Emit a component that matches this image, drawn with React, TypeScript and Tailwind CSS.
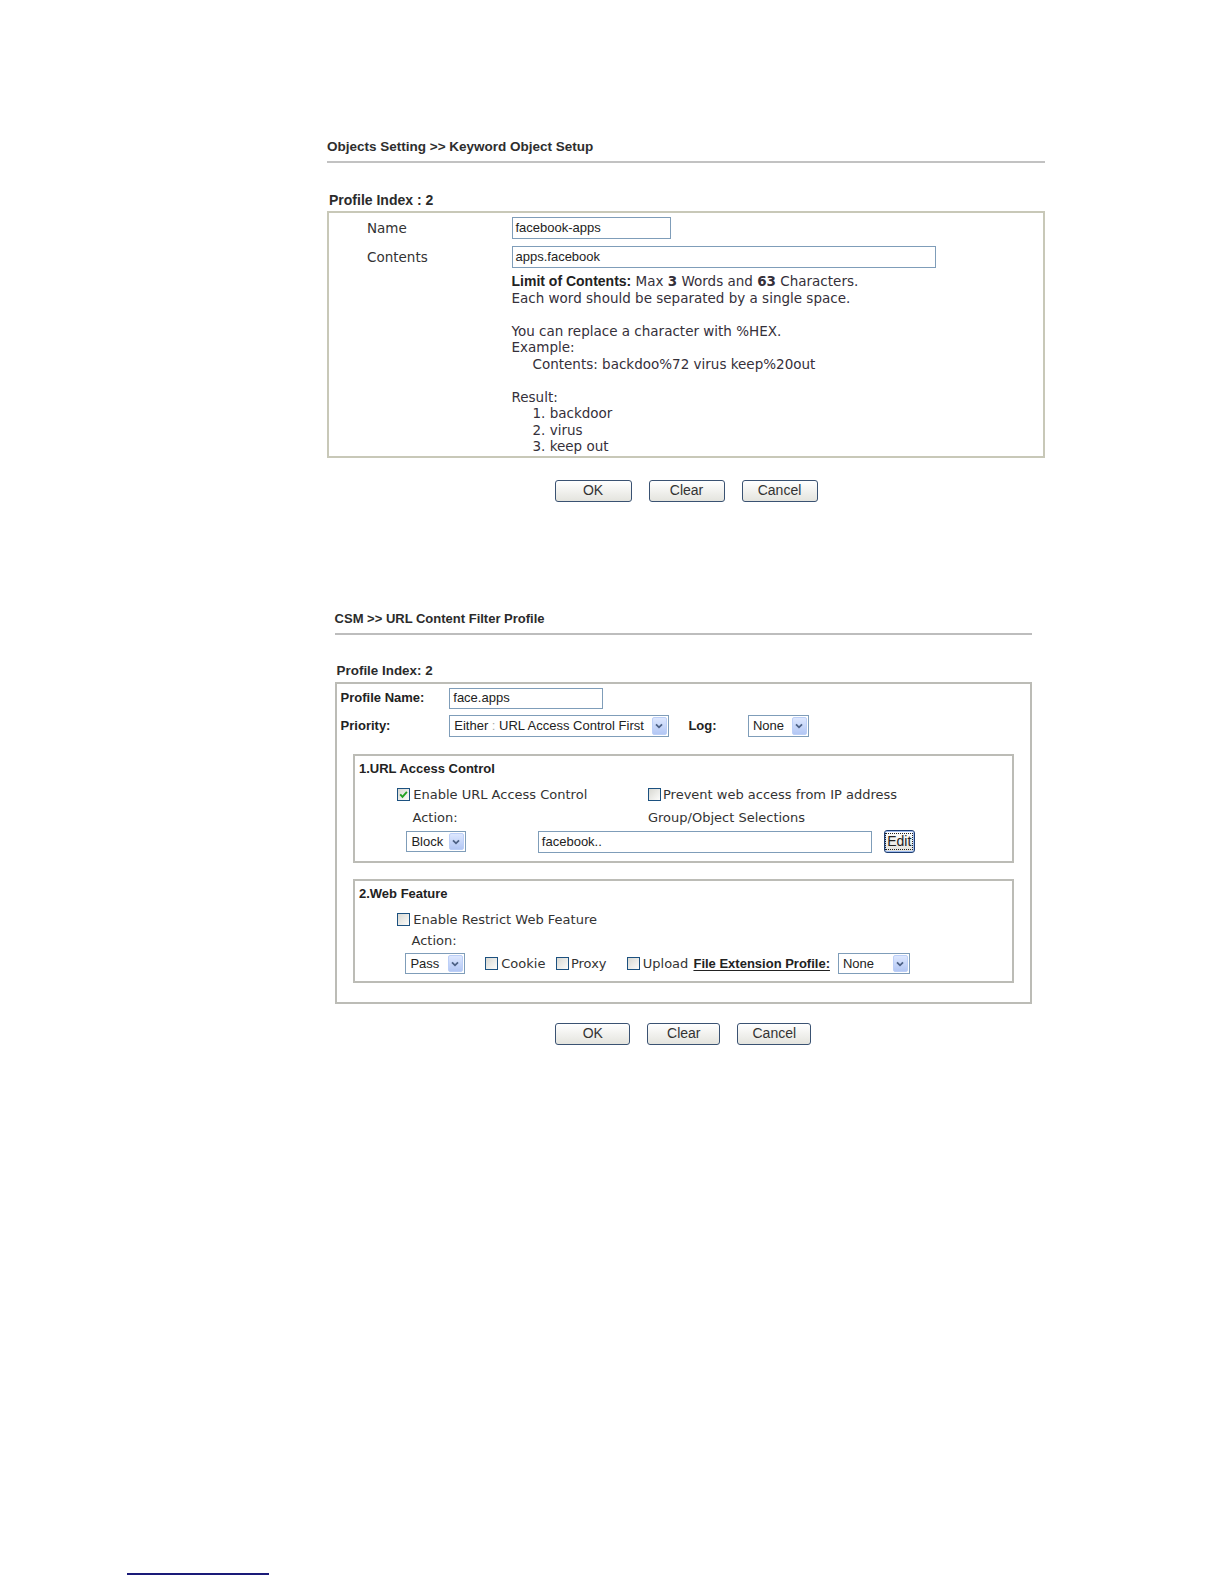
import React from "react";

const ARIAL = "font-['Liberation_Sans',Arial,sans-serif]";
const VERD = "font-['DejaVu_Sans',Verdana,sans-serif]";

function Arrow() {
  return (
    <span className="ml-auto mr-[1px] my-[1px] flex w-[15px] shrink-0 self-stretch items-center justify-center rounded-[2px] border border-[#bccff7] bg-linear-to-b from-[#dde7fe] to-[#b3c7f4]">
      <svg width="8" height="6" viewBox="0 0 8 6">
        <path d="M1 1.3 L4 4.3 L7 1.3" fill="none" stroke="#4d6185" strokeWidth="1.8" />
      </svg>
    </span>
  );
}

function Select({ cls, children }: { cls: string; children: React.ReactNode }) {
  return (
    <div className={"flex items-center border border-[#7f9db9] bg-white text-[13px] text-[#222] " + ARIAL + " " + cls}>
      <span className="pl-[4px] whitespace-nowrap">{children}</span>
      <Arrow />
    </div>
  );
}

function Input({ cls, value }: { cls: string; value: string }) {
  return (
    <div className={"flex items-center border border-[#7f9db9] bg-white pl-[3px] text-[13px] text-[#222] whitespace-nowrap " + ARIAL + " " + cls}>
      {value}
    </div>
  );
}

function Cb({ checked }: { checked?: boolean }) {
  return (
    <span className="flex h-[13px] w-[13px] shrink-0 items-center justify-center border border-[#1c5180] bg-linear-to-br from-[#d8d8d2] to-[#fcfcfb]">
      {checked && (
        <svg width="9" height="9" viewBox="0 0 9 9">
          <path d="M1.2 4.4 L3.5 6.8 L7.9 1.9" fill="none" stroke="#21a121" strokeWidth="1.9" />
        </svg>
      )}
    </span>
  );
}

function Btn({ label, cls }: { label: string; cls: string }) {
  return (
    <div className={"flex h-[22px] items-center justify-center rounded-[3px] border border-[#3a5272] bg-linear-to-b from-[#ffffff] to-[#e4e4de] text-[14px] text-[#333] " + ARIAL + " " + cls}>
      {label}
    </div>
  );
}

function Line({ children }: { children?: React.ReactNode }) {
  return <div className="h-[16.5px] leading-[16.5px] whitespace-nowrap">{children}</div>;
}

export default function App() {
  return (
    <div className="relative h-[1584px] w-[1224px] overflow-hidden bg-white text-[#333]">
      {/* Section 1 */}
      <div className="ml-[327px] w-[718px] pt-[139px]">
        <div className={"h-[16px] leading-[16px] text-[13.5px] font-bold text-[#2e2e2e] " + ARIAL}>
          Objects Setting &gt;&gt; Keyword Object Setup
        </div>
        <div className="mt-[6px] h-[2px] bg-[#c2c2c2]" />
        <div className={"mt-[29px] h-[16px] leading-[16px] pl-[2px] text-[14px] font-bold text-[#2b2b2b] " + ARIAL}>
          Profile Index : 2
        </div>
        <div className="mt-[3px] border-2 border-[#c8c8b8] pt-[4px] pb-[1px]">
          <div className="flex h-[22px] items-center">
            <div className={"w-[182.5px] pl-[38px] text-[13.5px] text-[#333] " + VERD}>Name</div>
            <Input cls="h-[22px] w-[159px]" value="facebook-apps" />
          </div>
          <div className="mt-[7px] flex h-[22px] items-center">
            <div className={"w-[182.5px] pl-[38px] text-[13.5px] text-[#333] " + VERD}>Contents</div>
            <Input cls="h-[22px] w-[424px]" value="apps.facebook" />
          </div>
          <div className={"mt-[5px] pl-[182.5px] text-[13.5px] text-[#35303a] " + VERD}>
            <Line>
              <span className={"text-[14px] font-bold text-[#222] " + ARIAL}>Limit of Contents:</span> Max <b>3</b> Words and <b>63</b> Characters.
            </Line>
            <Line>Each word should be separated by a single space.</Line>
            <Line />
            <Line>You can replace a character with %HEX.</Line>
            <Line>Example:</Line>
            <Line>
              <span className="pl-[21px]">Contents: backdoo%72 virus keep%20out</span>
            </Line>
            <Line />
            <Line>Result:</Line>
            <Line>
              <span className="pl-[21px]">1. backdoor</span>
            </Line>
            <Line>
              <span className="pl-[21px]">2. virus</span>
            </Line>
            <Line>
              <span className="pl-[21px]">3. keep out</span>
            </Line>
          </div>
        </div>
        <div className="mt-[22px] flex justify-center gap-[17px]">
          <Btn label="OK" cls="w-[77px]" />
          <Btn label="Clear" cls="w-[76px]" />
          <Btn label="Cancel" cls="w-[76px]" />
        </div>
      </div>

      {/* Section 2 */}
      <div className="ml-[334.6px] mt-[109px] w-[697.4px]">
        <div className={"h-[16px] leading-[16px] text-[13px] font-bold text-[#2b2b2b] " + ARIAL}>
          CSM &gt;&gt; URL Content Filter Profile
        </div>
        <div className="mt-[6px] h-[2px] bg-[#bdbdbd]" />
        <div className={"mt-[28px] h-[16px] leading-[16px] pl-[2px] text-[13.4px] font-bold text-[#2b2b2b] " + ARIAL}>
          Profile Index: 2
        </div>
        <div className="mt-[3px] border-2 border-[#bcbcb6] pt-[4px] pb-[19px]">
          <div className="flex h-[21px] items-center">
            <div className={"w-[112.7px] pl-[4px] text-[13px] font-bold text-[#222] " + ARIAL}>Profile Name:</div>
            <Input cls="h-[21px] w-[153.5px]" value="face.apps" />
          </div>
          <div className="mt-[6px] flex h-[22px] items-center">
            <div className={"w-[112.7px] pl-[4px] text-[13px] font-bold text-[#222] " + ARIAL}>Priority:</div>
            <Select cls="h-[22px] w-[219.5px]">
              Either <span className="text-[#aaa]">:</span> URL Access Control First
            </Select>
            <div className={"ml-[19.6px] w-[59.6px] text-[13px] font-bold text-[#222] " + ARIAL}>Log:</div>
            <Select cls="h-[22px] w-[61px]">None</Select>
          </div>

          {/* Subbox 1 */}
          <div className="mx-[16.2px] mt-[17.3px] border-2 border-[#bcbcb6] pt-[5.4px] pb-[7.4px]">
            <div className={"h-[16px] leading-[16px] pl-[4.2px] text-[13px] font-bold text-[#222] " + ARIAL}>
              1.URL Access Control
            </div>
            <div className={"mt-[8.2px] flex h-[18px] items-center text-[13px] text-[#333] " + VERD}>
              <div className="flex w-[293.2px] items-center pl-[42.5px]">
                <Cb checked />
                <span className="ml-[3px]">Enable URL Access Control</span>
              </div>
              <div className="flex items-center">
                <Cb />
                <span className="ml-[2px]">Prevent web access from IP address</span>
              </div>
            </div>
            <div className={"mt-[6.4px] flex h-[16px] items-center text-[13px] text-[#333] " + VERD}>
              <div className="w-[293.2px] pl-[57.7px]">Action:</div>
              <div>Group/Object Selections</div>
            </div>
            <div className="mt-[4px] flex h-[24px] items-center">
              <Select cls="ml-[51.6px] h-[21px] w-[59.6px]">Block</Select>
              <Input cls="ml-[71.9px] h-[22px] w-[334.6px]" value="facebook.." />
              <div className={"ml-[11.1px] flex h-[23px] w-[31.4px] items-center justify-center rounded-[3px] border border-[#1f3f72] bg-linear-to-b from-[#ffffff] to-[#e2e2dc] shadow-[inset_0_0_0_1px_#9fbcf0] text-[14px] text-[#222] " + ARIAL}>
                <span className="outline outline-1 outline-dotted outline-[#222] px-[1px] leading-[15px]">Edit</span>
              </div>
            </div>
          </div>

          {/* Subbox 2 */}
          <div className="mx-[16.2px] mt-[16.2px] border-2 border-[#bcbcb6] pt-[5.1px] pb-[7.1px]">
            <div className={"h-[16px] leading-[16px] pl-[4.2px] text-[13px] font-bold text-[#222] " + ARIAL}>
              2.Web Feature
            </div>
            <div className={"mt-[8.3px] flex h-[18px] items-center pl-[42.5px] text-[13px] text-[#333] " + VERD}>
              <Cb />
              <span className="ml-[3px]">Enable Restrict Web Feature</span>
            </div>
            <div className={"mt-[4.2px] h-[16px] leading-[16px] pl-[56.7px] text-[13px] text-[#333] " + VERD}>Action:</div>
            <div className={"mt-[4.2px] flex h-[21.2px] items-center text-[13px] text-[#333] " + VERD}>
              <Select cls="ml-[50.6px] h-[21.2px] w-[59.6px]">Pass</Select>
              <div className="ml-[20.3px] flex w-[70.7px] items-center">
                <Cb />
                <span className="ml-[3px]">Cookie</span>
              </div>
              <div className="flex w-[70.8px] items-center">
                <Cb />
                <span className="ml-[2px]">Proxy</span>
              </div>
              <div className="flex w-[66.7px] items-center">
                <Cb />
                <span className="ml-[3px]">Upload</span>
              </div>
              <div className={"w-[144.5px] text-[13px] font-bold text-[#222] underline underline-offset-2 " + ARIAL}>
                File Extension Profile:
              </div>
              <Select cls="h-[21.2px] w-[72px]">None</Select>
            </div>
          </div>
        </div>
        <div className="mt-[18.6px] flex justify-center gap-[17px]">
          <Btn label="OK" cls="w-[75px]" />
          <Btn label="Clear" cls="w-[73px]" />
          <Btn label="Cancel" cls="w-[74px]" />
        </div>
      </div>

      {/* footnote separator */}
      <div className="ml-[127px] mt-[528px] h-[2px] w-[142px] bg-[#1a1a78]" />
    </div>
  );
}
